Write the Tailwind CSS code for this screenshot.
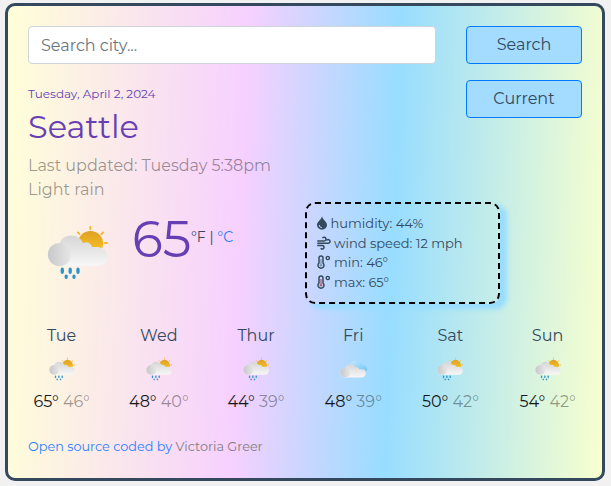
<!DOCTYPE html>
<html lang="en">
<head>
<meta charset="utf-8">
<title>Weather</title>
<script src="https://cdn.jsdelivr.net/npm/@tailwindcss/browser@4"></script>
</head>
<body class="bg-[#f1f1f1] pt-[3px] pl-[5px] h-[486px] overflow-hidden font-['Montserrat','Inter',sans-serif] font-normal text-[#34495e]">
<svg class="absolute w-0 h-0">
  <defs>
    <linearGradient id="c2" x1="0" x2="0" y1="0" y2="1"><stop offset="0" stop-color="#d6d6d7"/><stop offset="1" stop-color="#f7f7f7"/></linearGradient>
    <linearGradient id="c3" x1="0" x2="1"><stop offset="0" stop-color="#c8c8ca"/><stop offset="1" stop-color="#e6e6e7"/></linearGradient>
    <linearGradient id="s1" x1="0" x2="0" y1="0" y2="1"><stop offset="0" stop-color="#dfa126"/><stop offset="1" stop-color="#fcc91f"/></linearGradient>
    <linearGradient id="b1" x1="0" x2="1" y1="0" y2="1"><stop offset="0" stop-color="#c4eaff"/><stop offset="1" stop-color="#6fc2fa"/></linearGradient>
  </defs>
  <symbol id="cloud" viewBox="0 0 75 70">
    <path d="M18 51a11 11 0 0 1 1-22 13 13 0 0 1 24-1c4-2 8 0 9 4h6a9.500 9.500 0 0 1 0 19z" fill="url(#c2)"/>
    <circle cx="19.500" cy="39.500" r="11.500" fill="url(#c3)"/>
  </symbol>
  <symbol id="rain" viewBox="0 0 75 70">
    <g stroke="#fdb62b" stroke-width="2" stroke-linecap="round"><path d="M50.300 12v2M38 17.500l1.400 1.400M63 17.500l-1.600 1.600M65 28h2"/></g>
    <circle cx="50.500" cy="28.500" r="12.600" fill="url(#s1)"/>
    <use href="#cloud" width="75" height="70"/>
    <g fill="#2b93ce"><ellipse cx="22.300" cy="55.700" rx="1.700" ry="3.300"/><ellipse cx="30.200" cy="55.700" rx="1.700" ry="3.300"/><ellipse cx="38" cy="55.700" rx="1.700" ry="3.300"/><ellipse cx="26.200" cy="61.700" rx="1.700" ry="2.200"/><ellipse cx="34" cy="61.700" rx="1.700" ry="2.200"/></g>
  </symbol>
  <symbol id="cloudy" viewBox="0 0 75 70">
    <path d="M30 30a11 11 0 0 1 20-7 9 9 0 0 1 11 6 8 8 0 0 1 5 15H40z" fill="url(#b1)"/>
    <g transform="translate(0 6)"><use href="#cloud" width="75" height="70"/></g>
  </symbol>
  <symbol id="thermo" viewBox="0 0 14 14">
    <path d="M2 3a2 2 0 0 1 4 0v5a3 3 0 1 1-4 0z" fill="none" stroke="#34495e" stroke-width="1.500"/>
    <path d="M4 4v5" stroke="currentColor" stroke-width="1.300"/><circle cx="4" cy="10.300" r="1.300" fill="currentColor"/>
    <circle cx="10.800" cy="3" r="1.600" fill="none" stroke="#34495e" stroke-width="1.400"/>
  </symbol>
</svg>

<main class="w-[600px] h-[478px] border-[3px] border-[#34495e] rounded-[10px] pt-5 pl-5 bg-[linear-gradient(92.1deg,#ffffd8_0%,#f6d0ff_39.5%,#98ddff_64.3%,#f8ffce_100%)]">
  <div class="flex h-[128px]">
    <div class="w-[408px] mr-[30px]">
      <div class="h-[38px] rounded-[4px] border border-[#ced4da] bg-white pl-3 pt-px flex items-center text-base text-[#6c757d]"><span>Search city...</span></div>
      <div class="mt-5 h-[19px] leading-[19px] text-[12px] text-[#663fb4]">Tuesday, April 2, 2024</div>
      <h1 class="mt-[5px] h-[38px] leading-[38px] text-[32px] text-[#663fb4]">Seattle</h1>
    </div>
    <div class="w-[116px] text-base text-center">
      <button class="block w-full h-[38px] rounded-[4px] border border-[#007bff] bg-[#a3dcff]">Search</button>
      <button class="block w-full h-[38px] mt-4 rounded-[4px] border border-[#007bff] bg-[#a3dcff]">Current</button>
    </div>
  </div>

  <div class="text-base leading-6 text-black/40"><p>Last updated: Tuesday 5:38pm</p><p>Light rain</p></div>

  <div class="flex h-[122px]">
    <svg class="ml-3 mt-[13px] w-[75px] h-[70px] shrink-0"><use href="#rain"/></svg>
    <div class="ml-[17px] w-[173px] flex">
      <span class="text-[50.500px] leading-[74px] text-[#663fb4] w-[59px]">65</span>
      <span class="text-[14px] leading-[20px] mt-[25px] whitespace-nowrap">°F | <a class="text-[#2779f6]">°C</a></span>
    </div>
    <div class="w-[195px] h-[102px] rounded-[10px] border-2 border-dashed border-black p-[10px] text-[13px] leading-[19.5px] shadow-[6px_4px_5px_1px_#98ddff]">
      <p class="flex items-center"><svg class="w-[10px] h-[14px] mr-[3.5px] -mt-0.5" viewBox="0 0 10 14"><path d="M5 .5C5.800 3.500 10 5.800 10 9A5 4.700 0 0 1 0 9C0 5.800 4.200 3.500 5 .5z" fill="#34495e"/><path d="M2.200 9a2.600 2.600 0 0 0 2.600 2.600" fill="none" stroke="#b7d8ff"/></svg><span>humidity: 44%</span></p>
      <p class="flex items-center"><svg class="w-[14px] h-[14px] mr-[3px] -mt-px" viewBox="0 0 14 14" fill="none" stroke="#34495e" stroke-width="1.500" stroke-linecap="round"><path d="M.8 5h6.400a1.900 1.900 0 1 0-1.300-3.400M.8 7.200h10.600a1.800 1.800 0 1 0-1.300-3.200M.8 9.400h4.600a1.800 1.800 0 1 1-1.300 3.200"/></svg><span>wind speed: 12 mph</span></p>
      <p class="flex items-center"><svg class="w-[14px] h-[14px] mr-[3px] -mt-px text-[#7b95b5]"><use href="#thermo"/></svg><span>min: 46°</span></p>
      <p class="flex items-center"><svg class="w-[14px] h-[14px] mr-[3px] -mt-px text-[#b55f74]"><use href="#thermo"/></svg><span>max: 65°</span></p>
    </div>
  </div>

  <div class="grid grid-cols-6 w-[583.2px] -ml-[15px] text-center text-base leading-6">
    <div><p>Tue</p><svg class="w-8 h-[30px] mx-auto mt-[5px] mb-[7px]"><use href="#rain"/></svg><p class="text-[#15181b]"><span>65°</span> <span class="text-black/40">46°</span></p></div>
    <div><p>Wed</p><svg class="w-8 h-[30px] mx-auto mt-[5px] mb-[7px]"><use href="#rain"/></svg><p class="text-[#15181b]"><span>48°</span> <span class="text-black/40">40°</span></p></div>
    <div><p>Thur</p><svg class="w-8 h-[30px] mx-auto mt-[5px] mb-[7px]"><use href="#rain"/></svg><p class="text-[#15181b]"><span>44°</span> <span class="text-black/40">39°</span></p></div>
    <div><p>Fri</p><svg class="w-8 h-[30px] mx-auto mt-[5px] mb-[7px]"><use href="#cloudy"/></svg><p class="text-[#15181b]"><span>48°</span> <span class="text-black/40">39°</span></p></div>
    <div><p>Sat</p><svg class="w-8 h-[30px] mx-auto mt-[5px] mb-[7px]"><use href="#rain"/></svg><p class="text-[#15181b]"><span>50°</span> <span class="text-black/40">42°</span></p></div>
    <div><p>Sun</p><svg class="w-8 h-[30px] mx-auto mt-[5px] mb-[7px]"><use href="#rain"/></svg><p class="text-[#15181b]"><span>54°</span> <span class="text-black/40">42°</span></p></div>
  </div>

  <footer class="mt-[23px] text-[12.8px] leading-[19.5px] text-[#808080]"><a class="text-[#2b80ff]">Open source coded by</a> <span>Victoria Greer</span></footer>
</main>
</body>
</html>
